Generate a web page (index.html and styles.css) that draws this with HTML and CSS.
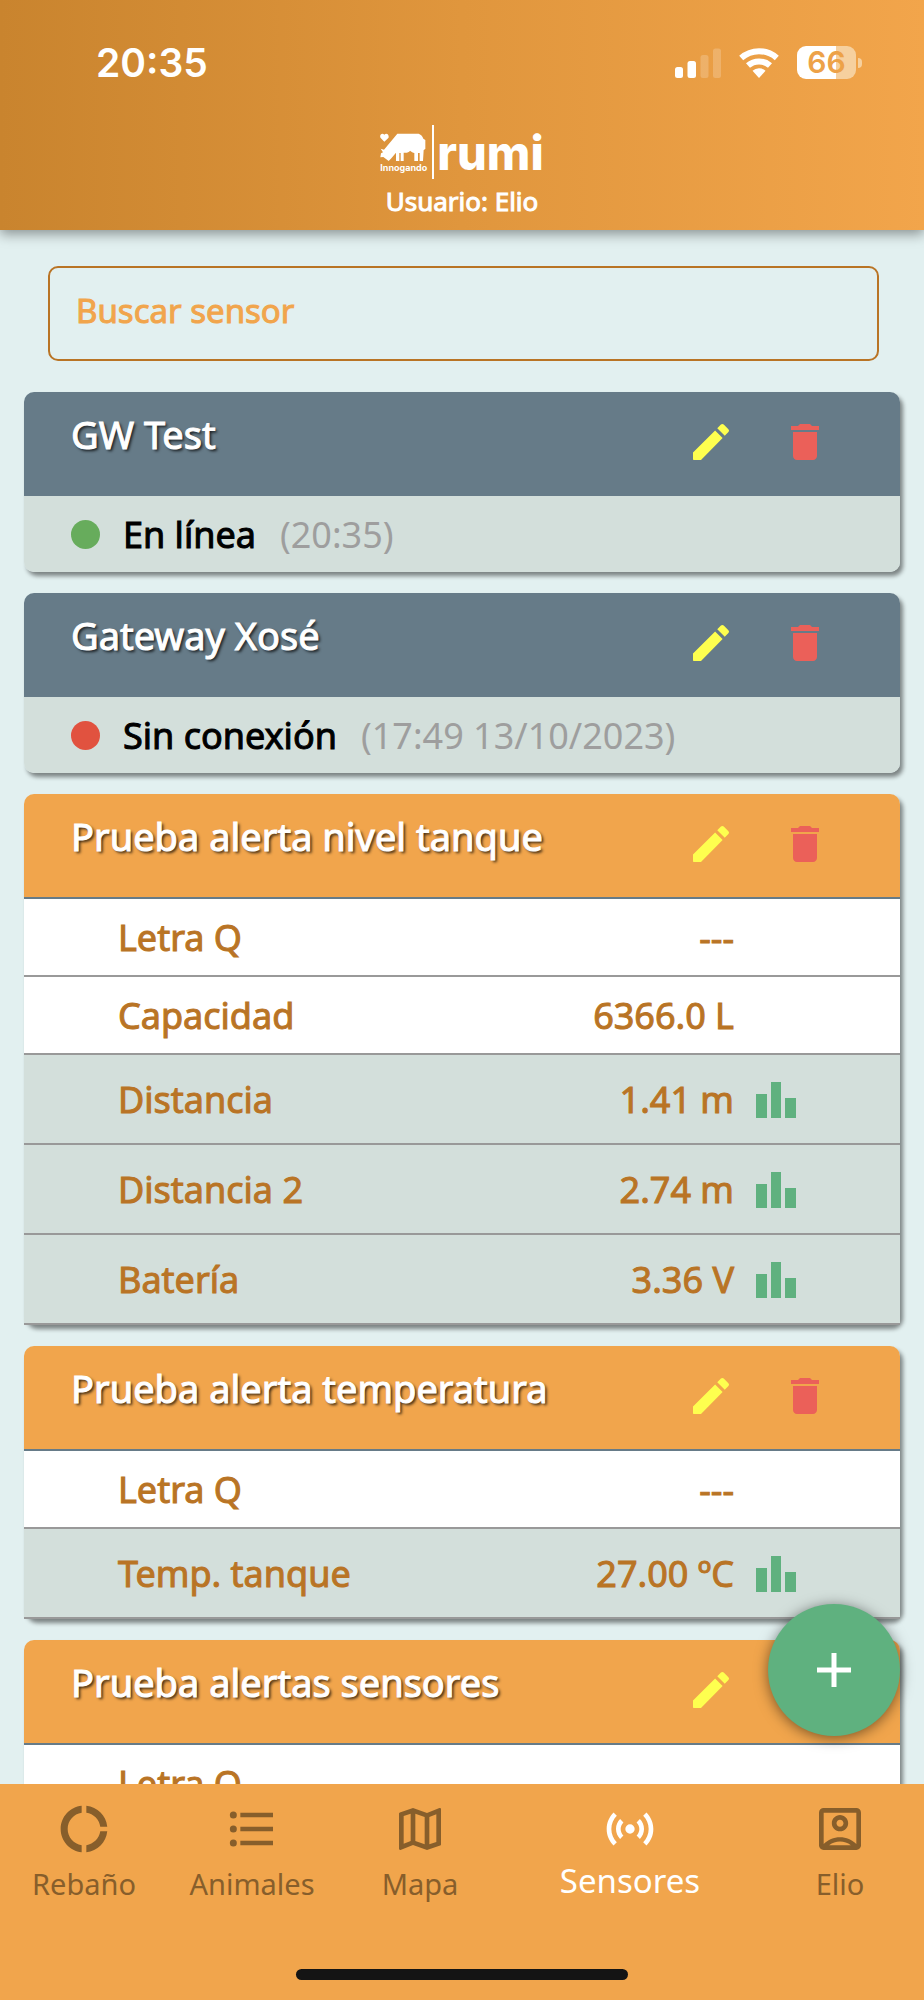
FILE: index.html
```html
<!DOCTYPE html>
<html lang="es">
<head>
<meta charset="utf-8">
<meta name="viewport" content="width=device-width, initial-scale=1">
<title>rumi - Sensores</title>
<link rel="stylesheet" href="styles.css">
</head>
<body>
<svg class="sprite" aria-hidden="true">
  <symbol id="i-edit" viewBox="0 0 24 24"><path d="M3 17.46v3.04c0 .28.22.5.5.5H7L17.81 9.94l-3.75-3.75L3 17.25zM20.71 7.04a1 1 0 0 0 0-1.41l-2.34-2.34a1 1 0 0 0-1.41 0l-1.83 1.83 3.75 3.75z"/></symbol>
  <symbol id="i-delete" viewBox="0 0 24 24"><path d="M6 19c0 1.1.9 2 2 2h8c1.100 0 2-.9 2-2V7H6zM19 4h-3.500l-1-1h-5l-1 1H5v2h14z"/></symbol>
  <symbol id="i-chart" viewBox="0 0 40 36"><path d="M0 12h11v24H0zM15 0h10v36H15zM29 16h11v20H29z"/></symbol>
</svg>
<div class="app">
  <header class="topbar">
    <div class="status">
      <span class="clock">20:35</span>
      <div class="status-icons">
        <svg width="46" height="30" viewBox="0 0 46 30" fill="#fff"><rect y="19" width="8" height="11" rx="2.500"/><rect x="12.500" y="13" width="8.500" height="17" rx="2.500"/><g opacity=".2"><rect x="25.500" y="7" width="8" height="23" rx="2.500"/><rect x="38" y="0.500" width="8" height="29.500" rx="2.500"/></g></svg>
        <svg width="40" height="30" viewBox="0 0 40 30" fill="none" stroke="#fff" stroke-width="6"><path d="M2.200 10A26.700 26.700 0 0 1 37.800 10"/><path d="M9 17.600a16.500 16.500 0 0 1 22 0"/><path d="M20 30l-6.500-7.200a9.700 9.700 0 0 1 13 0z" fill="#fff" stroke="none"/></svg>
        <div class="battery"><span class="battery-body">66</span><span class="battery-tip"></span></div>
      </div>
    </div>
    <div class="brand">
      <div class="maker">
        <svg width="46" height="28" viewBox="34 50 138 84" fill="#fff"><path d="M47 76L36 65c-5-7 3-17 11-10 8-7 16 3 12 10z"/><path d="M86 52h64c8 3 12 8 14 15l6 4v27l-5 3-2 33h-10v-24h-5v24h-11v-24c-4-2-9-3-13-7-3 4-8 6-13 6h-6v25h-9v-24h-4v24H82v-25L68 126l-8 8-16-12-9 1 2-12 6-3-7-11 10 3z"/></svg>
        <span>Innogando</span>
      </div>
      <span class="brand-name">rumi</span>
    </div>
    <p class="user">Usuario: Elio</p>
  </header>

  <main class="content">
    <div class="list">
      <input class="search" type="search" placeholder="Buscar sensor" aria-label="Buscar sensor">

      <section class="card gateway">
        <header class="card-head"><h2>GW Test</h2>
          <div class="actions"><button type="button" class="edit" aria-label="Editar"><svg><use href="#i-edit"/></svg></button><button type="button" class="delete" aria-label="Eliminar"><svg><use href="#i-delete"/></svg></button></div>
        </header>
        <p class="state"><span class="dot online"></span><strong>En línea</strong><time>(20:35)</time></p>
      </section>

      <section class="card gateway">
        <header class="card-head"><h2>Gateway Xosé</h2>
          <div class="actions"><button type="button" class="edit" aria-label="Editar"><svg><use href="#i-edit"/></svg></button><button type="button" class="delete" aria-label="Eliminar"><svg><use href="#i-delete"/></svg></button></div>
        </header>
        <p class="state"><span class="dot offline"></span><strong>Sin conexión</strong><time>(17:49 13/10/2023)</time></p>
      </section>

      <section class="card sensor">
        <header class="card-head"><h2>Prueba alerta nivel tanque</h2>
          <div class="actions"><button type="button" class="edit" aria-label="Editar"><svg><use href="#i-edit"/></svg></button><button type="button" class="delete" aria-label="Eliminar"><svg><use href="#i-delete"/></svg></button></div>
        </header>
        <table>
          <tr><th scope="row">Letra Q</th><td>---</td><td class="plot"></td></tr>
          <tr><th scope="row">Capacidad</th><td>6366.0 L</td><td class="plot"></td></tr>
          <tr class="measure"><th scope="row">Distancia</th><td>1.41 m</td><td class="plot"><button type="button" aria-label="Gráfica de Distancia"><svg><use href="#i-chart"/></svg></button></td></tr>
          <tr class="measure"><th scope="row">Distancia 2</th><td>2.74 m</td><td class="plot"><button type="button" aria-label="Gráfica de Distancia 2"><svg><use href="#i-chart"/></svg></button></td></tr>
          <tr class="measure"><th scope="row">Batería</th><td>3.36 V</td><td class="plot"><button type="button" aria-label="Gráfica de Batería"><svg><use href="#i-chart"/></svg></button></td></tr>
        </table>
      </section>

      <section class="card sensor">
        <header class="card-head"><h2>Prueba alerta temperatura</h2>
          <div class="actions"><button type="button" class="edit" aria-label="Editar"><svg><use href="#i-edit"/></svg></button><button type="button" class="delete" aria-label="Eliminar"><svg><use href="#i-delete"/></svg></button></div>
        </header>
        <table>
          <tr><th scope="row">Letra Q</th><td>---</td><td class="plot"></td></tr>
          <tr class="measure"><th scope="row">Temp. tanque</th><td>27.00 ºC</td><td class="plot"><button type="button" aria-label="Gráfica de Temp. tanque"><svg><use href="#i-chart"/></svg></button></td></tr>
        </table>
      </section>

      <section class="card sensor">
        <header class="card-head"><h2>Prueba alertas sensores</h2>
          <div class="actions"><button type="button" class="edit" aria-label="Editar"><svg><use href="#i-edit"/></svg></button><button type="button" class="delete" aria-label="Eliminar"><svg><use href="#i-delete"/></svg></button></div>
        </header>
        <table>
          <tr><th scope="row">Letra Q</th><td></td><td class="plot"></td></tr>
        </table>
      </section>
    </div>
    <button type="button" class="fab" aria-label="Añadir sensor"><svg width="34" height="34" viewBox="0 0 34 34"><path d="M17 0v34M0 17h34" stroke="#fff" stroke-width="5"/></svg></button>
  </main>

  <footer class="bottom">
    <nav class="tabs">
      <a href="#rebano"><svg viewBox="0 0 24 24"><path d="M11 5.080V2.050C5.950 2.550 2 6.820 2 12s3.950 9.450 9 9.950v-3.030C7.610 18.430 5 15.520 5 12s2.610-6.430 6-6.920zM18.970 11h3C21.530 6.260 17.750 2.490 13 2.050v3.030c3.090.44 5.540 2.860 5.970 5.920zM13 18.920v3.030c4.750-.44 8.530-4.210 8.970-8.950h-3c-.43 3.060-2.880 5.480-5.970 5.920z"/></svg><span>Rebaño</span></a>
      <a href="#animales"><svg viewBox="0 0 24 24"><circle cx="4" cy="6" r="1.500"/><circle cx="4" cy="12" r="1.500"/><circle cx="4" cy="18" r="1.500"/><path d="M7 5h14v2H7zM7 11h14v2H7zM7 17h14v2H7z"/></svg><span>Animales</span></a>
      <a href="#mapa"><svg viewBox="0 0 24 24"><path d="M20.500 3l-.16.030L15 5.100 9 3 3.360 4.900c-.21.070-.36.250-.36.480V20.500c0 .28.220.5.500.5l.16-.03L9 18.900l6 2.100 5.640-1.900c.21-.07.36-.25.36-.48V3.500c0-.28-.22-.5-.5-.5zM10 5.470l4 1.400v11.660l-4-1.400zM5 6.460l3-1.010v11.700l-3 1.160zM19 17.540l-3 1.010V6.860l3-1.160z"/></svg><span>Mapa</span></a>
      <a href="#sensores" class="active" aria-current="page"><svg viewBox="0 0 24 24"><path d="M7.760 16.240C6.670 15.160 6 13.660 6 12s.67-3.160 1.760-4.240l1.420 1.420C8.450 9.900 8 10.900 8 12s.45 2.100 1.170 2.830zM16.240 16.240C17.330 15.160 18 13.660 18 12s-.67-3.160-1.760-4.240l-1.420 1.420C15.550 9.900 16 10.900 16 12s-.45 2.100-1.170 2.830zM12 10a2 2 0 1 0 0 4 2 2 0 0 0 0-4zM22 12c0 2.760-1.120 5.260-2.930 7.070l-1.420-1.420C19.100 16.210 20 14.210 20 12s-.9-4.210-2.350-5.650l1.420-1.420C20.880 6.740 22 9.240 22 12zM6.350 6.350L4.930 4.930C3.120 6.740 2 9.240 2 12s1.120 5.260 2.930 7.070l1.420-1.420C4.900 16.210 4 14.210 4 12s.9-4.210 2.350-5.650z"/></svg><span>Sensores</span></a>
      <a href="#elio"><svg viewBox="0 0 24 24"><path d="M19 3H5a2 2 0 0 0-2 2v14c0 1.100.9 2 2 2h14c1.100 0 2-.9 2-2V5a2 2 0 0 0-2-2zM7.350 19a7.500 7.500 0 0 1 9.300 0zM19 18.410C17.160 16.650 14.710 15.500 12 15.500S6.840 16.650 5 18.410V5h14zM12 13c1.930 0 3.500-1.570 3.500-3.500S13.930 6 12 6 8.500 7.570 8.500 9.500 10.070 13 12 13zM12 8c.83 0 1.500.67 1.500 1.500S12.830 11 12 11s-1.500-.67-1.500-1.500S11.170 8 12 8z" fill-rule="evenodd"/></svg><span>Elio</span></a>
    </nav>
    <div class="home-bar"></div>
  </footer>
</div>
</body>
</html>
```
FILE: styles.css
```css
:root {
  --orange: #f1a54c;
  --brown: #b97425;
  --slate: #667b88;
  --green: #5fb17f;
  --mist: #d3dfdb;
}
* { box-sizing: border-box; }
body { margin: 0; font-family: "Noto Sans", "Open Sans", sans-serif; }
h2, p { margin: 0; font-weight: 400; }
button { padding: 0; border: 0; background: none; display: block; cursor: pointer; }
svg { display: block; }
.sprite { position: absolute; width: 0; height: 0; }

.app { display: flex; flex-direction: column; height: 100vh; background: #e2f0f0; }

.topbar {
  position: relative;
  z-index: 1;
  flex: none;
  padding-bottom: 11px;
  color: #fff;
  background: linear-gradient(90deg, #c9842e, #e0963d 50%, #f2a54b);
  box-shadow: 0 4px 12px rgba(0, 0, 0, .4);
}
.status {
  display: flex;
  align-items: center;
  justify-content: space-between;
  height: 125px;
  padding: 0 62px 0 96px;
}
.clock { font: 600 39px/48px Inter, sans-serif; }
.status-icons { display: flex; align-items: center; gap: 18px; }
.battery { display: flex; align-items: center; gap: 2px; }
.battery-body {
  width: 59px;
  border-radius: 9px;
  background: linear-gradient(90deg, #fff 66%, #f6d09e 66%);
  color: #eda248;
  font: 600 30px/33px Inter, sans-serif;
  text-align: center;
}
.battery-tip { width: 4px; height: 10px; border-radius: 0 5px 5px 0; background: #f6d09e; }

.brand { display: flex; justify-content: center; height: 54px; }
.maker {
  display: flex;
  flex-direction: column;
  gap: 1px;
  padding: 8px 5px 0 0;
  border-right: 2px solid #fff;
  font: 700 9px/12px Inter, sans-serif;
}
.brand-name { padding-left: 3px; font: 800 47px/56px Inter, sans-serif; }
.user {
  margin-top: 4px;
  font-size: 26px;
  line-height: 36px;
  text-align: center;
  -webkit-text-stroke: 1px;
}

.content { position: relative; flex: 1; min-height: 0; }
.list {
  display: flex;
  flex-direction: column;
  gap: 21px;
  height: 100%;
  overflow: hidden;
  padding: 36px 24px 0;
}
.list > * { flex: none; }
.search {
  margin: 0 21px 10px 24px;
  height: 95px;
  padding: 0 26px 6px;
  border: 2px solid var(--brown);
  border-radius: 10px;
  background: none;
  color: var(--orange);
  font: 400 33px "Noto Sans", sans-serif;
  -webkit-text-stroke: 1px;
}
.search::placeholder { color: var(--orange); opacity: 1; }

.card { border-radius: 10px; box-shadow: 3px 4px 4px rgba(0, 0, 0, .45); }
.card-head {
  display: flex;
  align-items: flex-start;
  justify-content: space-between;
  min-height: 104px;
  padding: 20px 71px 20px 47px;
  border-radius: 10px 10px 0 0;
  background: var(--slate);
}
.card-head h2 {
  color: #fff;
  font-size: 38px;
  line-height: 44px;
  -webkit-text-stroke: 1px;
  text-shadow: 2px 2px 3px rgba(0, 0, 0, .8);
}
.sensor .card-head { min-height: 105px; background: var(--orange); border-bottom: 2px solid var(--slate); }
.actions { display: flex; gap: 46px; padding-top: 6px; }
.actions svg { width: 48px; height: 48px; }
.edit { fill: #feff4f; }
.delete { fill: #eb6059; }

.state {
  display: flex;
  align-items: center;
  height: 76px;
  padding: 0 47px;
  border-radius: 0 0 10px 10px;
  background: var(--mist);
  font-size: 36px;
}
.dot { width: 29px; height: 29px; margin-right: 23px; border-radius: 50%; }
.online { background: #67ac5c; }
.offline { background: #e1523f; }
.state strong { font-weight: 400; -webkit-text-stroke: 1px; }
.state time { margin-left: 24px; color: #9e9e9e; }

table { width: 100%; border-collapse: separate; border-spacing: 0; background: #fff; }
th, td {
  height: 78px;
  padding: 2px 0 0;
  border-bottom: 2px solid #999;
  color: var(--brown);
  font-size: 36px;
  line-height: 44px;
  font-weight: 400;
  -webkit-text-stroke: 1px;
}
th { padding-left: 94px; text-align: left; }
td { text-align: right; }
.measure th, .measure td { height: 90px; background: var(--mist); }
.plot { width: 166px; padding-left: 22px; }
.plot svg { width: 40px; height: 36px; fill: var(--green); }

.fab {
  position: absolute;
  right: 24px;
  bottom: 48px;
  display: grid;
  place-items: center;
  width: 132px;
  height: 132px;
  border-radius: 50%;
  background: var(--green);
  box-shadow: 0 2px 14px rgba(0, 0, 0, .5);
}

.bottom { flex: none; padding: 17px 0 20px; background: var(--orange); }
.tabs { display: flex; height: 168px; }
.tabs a {
  display: flex;
  flex: 2;
  flex-direction: column;
  align-items: center;
  gap: 8px;
  color: #875e2b;
  fill: currentColor;
  font-size: 29px;
  line-height: 38px;
  text-decoration: none;
}
.tabs svg { width: 56px; height: 56px; }
.tabs .active { flex: 3; gap: 5px; color: #fff; font-size: 33px; }
.home-bar { width: 36%; height: 11px; margin: 0 auto; border-radius: 6px; background: #141414; }
```
